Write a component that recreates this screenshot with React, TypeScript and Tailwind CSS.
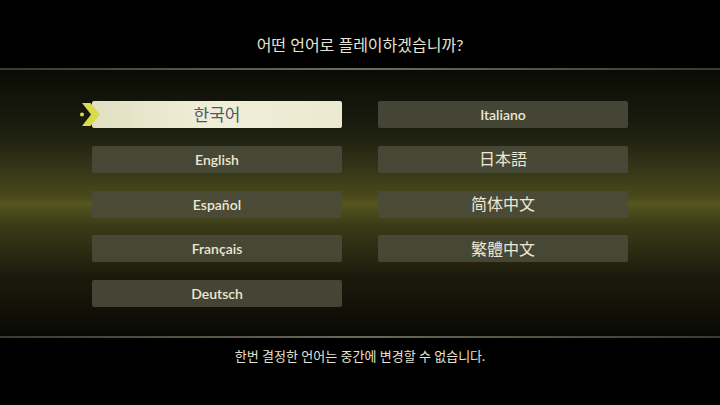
import React from "react";

const FONT = "font-['Lato','Noto_Sans_CJK_KR','Noto_Sans',sans-serif]";

const left = ["한국어", "English", "Español", "Français", "Deutsch"];
const right = ["Italiano", "日本語", "简体中文", "繁體中文"];

const isCjk = (s: string) => /[\u3040-\u9fff\uac00-\ud7af]/.test(s);

function SelectArrow() {
  return (
    <svg className="absolute left-[-13px] top-[1px]" width="22" height="25" viewBox="0 0 22 25">
      <path d="M3 1 L11.5 1 L21 12.5 L11.5 24 L3 24 L12 12.5 Z" fill="#d9da4c" />
      <circle cx="3" cy="12.5" r="2" fill="#d9da4c" />
    </svg>
  );
}

function LangButton({ label, selected }: { label: string; selected?: boolean }) {
  const type = isCjk(label) ? "text-[16px] font-normal" : "text-[14px] font-semibold";
  if (selected) {
    return (
      <div className="relative h-[27px]">
        <div className="flex h-full items-center justify-center rounded-[2px] bg-gradient-to-r from-[#e2e0c2] via-[#f0eed8] to-[#ebe9cf] text-[17px] text-[#4d5a6a]">
          {label}
        </div>
        <SelectArrow />
      </div>
    );
  }
  return (
    <div className={`flex h-[27px] items-center justify-center rounded-[2px] bg-[#4a4a3a]/90 text-[#ece8d4] ${type}`}>
      {label}
    </div>
  );
}

export default function App() {
  return (
    <div className={`flex h-[405px] w-[720px] flex-col bg-black ${FONT}`}>
      <header className="flex h-[68px] items-end justify-center pb-[11px] text-[16px] text-[#e6e3d2]">
        어떤 언어로 플레이하겠습니까?
      </header>
      <div className="h-[2px] bg-gradient-to-r from-[#3a3a30] via-[#6e6d5e] to-[#3a3a30]" />
      <main className="flex-1 bg-[linear-gradient(to_bottom,#0b0b06_0%,#1e2010_25%,#4a4a1e_48%,#58561f_50%,#3c3c18_58%,#1a1a0c_78%,#0a0a05_100%)] px-[92px] pt-[31px]">
        <div className="grid grid-cols-2 gap-x-[36px]">
          <div className="flex flex-col gap-[17.8px]">
            {left.map((l, i) => (
              <LangButton key={l} label={l} selected={i === 0} />
            ))}
          </div>
          <div className="flex flex-col gap-[17.8px]">
            {right.map((l) => (
              <LangButton key={l} label={l} />
            ))}
          </div>
        </div>
      </main>
      <div className="h-[2px] bg-gradient-to-r from-[#3a3a30] via-[#6a6a5a] to-[#3a3a30]" />
      <footer className="flex h-[67px] items-start justify-center pt-[9px] text-[13px] text-[#e6e3d2]">
        한번 결정한 언어는 중간에 변경할 수 없습니다.
      </footer>
    </div>
  );
}
